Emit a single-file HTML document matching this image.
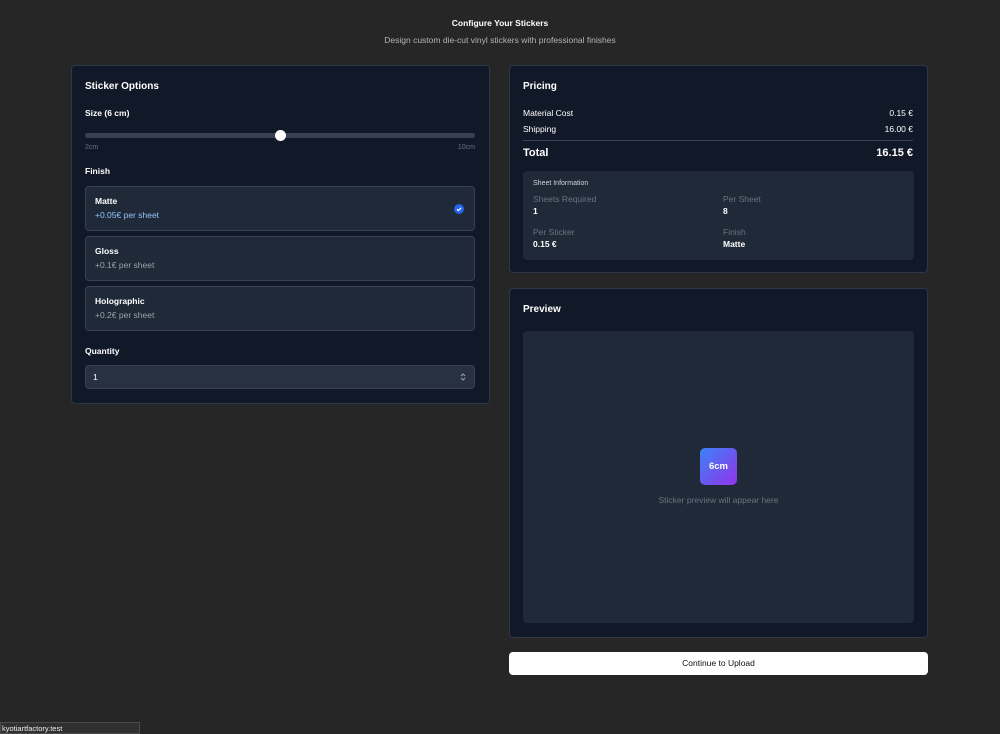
<!DOCTYPE html>
<html><head><meta charset="utf-8"><style>
*{box-sizing:border-box;margin:0;padding:0}
body{width:1000px;height:734px;background:#262626;font-family:"Liberation Sans",sans-serif;color:#fff;position:relative;overflow:hidden;font-size:9px}
.abs{position:absolute}
.card{position:absolute;background:#111827;border:1px solid #2d3748;border-radius:4px}
.h{font-size:10px;font-weight:bold}
.opt{position:absolute;left:13px;width:390px;height:45px;background:#1f2937;border:1px solid #374151;border-radius:4px}
.opt .t{position:absolute;left:9px;top:9px;font-weight:bold;font-size:8.5px}
.opt .s{position:absolute;left:9px;top:23px;font-size:8.5px;color:#9ca3af}
.row{position:absolute;left:13px;right:14px;font-size:8.5px}
.row span:last-child{float:right}
.lbl{position:absolute;color:#6b7280;font-size:8.5px}
.val{position:absolute;font-weight:bold;font-size:8.5px}
</style></head><body>
<div class="abs h" style="left:0;width:1000px;top:18px;text-align:center;font-size:8.5px">Configure Your Stickers</div>
<div class="abs" style="left:0;width:1000px;top:35px;text-align:center;font-size:8.5px;color:#b0b4bb">Design custom die-cut vinyl stickers with professional finishes</div>

<div class="card" style="left:71px;top:65px;width:419px;height:339px">
 <div class="abs h" style="left:13px;top:15px">Sticker Options</div>
 <div class="abs" style="left:13px;top:42px;font-weight:bold;font-size:8.5px">Size (6 cm)</div>
 <div class="abs" style="left:13px;top:67px;width:390px;height:5px;background:#374151;border-radius:3px"></div>
 <div class="abs" style="left:203px;top:64px;width:11px;height:11px;background:#fff;border-radius:50%"></div>
 <div class="abs" style="left:13px;top:78px;font-size:7px;color:#6b7280">2cm</div>
 <div class="abs" style="right:14px;top:78px;font-size:7px;color:#6b7280">10cm</div>
 <div class="abs" style="left:13px;top:100px;font-weight:bold;font-size:8.5px">Finish</div>
 <div class="opt" style="top:120px"><div class="t">Matte</div><div class="s" style="color:#93c5fd">+0.05€ per sheet</div>
  <div class="abs" style="right:10px;top:17px;width:10px;height:10px;border-radius:50%;background:#2563eb"><svg width="10" height="10" viewBox="0 0 10 10"><path d="M3 5.2l1.4 1.4L7.2 3.8" stroke="#fff" stroke-width="1.2" fill="none"/></svg></div></div>
 <div class="opt" style="top:170px"><div class="t">Gloss</div><div class="s">+0.1€ per sheet</div></div>
 <div class="opt" style="top:220px"><div class="t">Holographic</div><div class="s">+0.2€ per sheet</div></div>
 <div class="abs" style="left:13px;top:280px;font-weight:bold;font-size:8.5px">Quantity</div>
 <div class="abs" style="left:13px;top:299px;width:390px;height:24px;background:#283141;border:1px solid #374151;border-radius:4px">
  <div class="abs" style="left:7px;top:6px;font-size:8.5px">1</div>
  <svg class="abs" style="right:8px;top:6px" width="6" height="10" viewBox="0 0 6 10"><path d="M1 4l2-2 2 2M1 6l2 2 2-2" stroke="#9ca3af" fill="none"/></svg>
 </div>
</div>

<div class="card" style="left:509px;top:65px;width:419px;height:208px">
 <div class="abs h" style="left:13px;top:15px">Pricing</div>
 <div class="row" style="top:42px"><span>Material Cost</span><span>0.15 €</span></div>
 <div class="row" style="top:58px"><span>Shipping</span><span>16.00 €</span></div>
 <div class="abs" style="left:13px;right:14px;top:74px;height:1px;background:#374151"></div>
 <div class="row" style="top:81px;font-size:11px;font-weight:bold"><span>Total</span><span>16.15 €</span></div>
 <div class="abs" style="left:13px;top:105px;width:391px;height:89px;background:#1f2937;border-radius:4px">
  <div class="abs" style="left:10px;top:9px;font-size:7px;color:#d1d5db">Sheet Information</div>
  <div class="lbl" style="left:10px;top:23px">Sheets Required</div><div class="val" style="left:10px;top:35px">1</div>
  <div class="lbl" style="left:200px;top:23px">Per Sheet</div><div class="val" style="left:200px;top:35px">8</div>
  <div class="lbl" style="left:10px;top:56px">Per Sticker</div><div class="val" style="left:10px;top:68px">0.15 €</div>
  <div class="lbl" style="left:200px;top:56px">Finish</div><div class="val" style="left:200px;top:68px">Matte</div>
 </div>
</div>

<div class="card" style="left:509px;top:288px;width:419px;height:350px">
 <div class="abs h" style="left:13px;top:15px">Preview</div>
 <div class="abs" style="left:13px;top:42px;width:391px;height:292px;background:#1f2937;border-radius:4px">
  <div class="abs" style="left:177px;top:117px;width:37px;height:37px;border-radius:5px;background:linear-gradient(135deg,#3b82f6,#9333ea);text-align:center;line-height:37px;font-weight:bold;font-size:9.5px">6cm</div>
  <div class="abs" style="left:0;width:391px;top:164px;text-align:center;color:#6b7280;font-size:8.5px">Sticker preview will appear here</div>
 </div>
</div>

<div class="abs" style="left:509px;top:652px;width:419px;height:23px;background:#fff;border-radius:4px;color:#111;text-align:center;line-height:23px;font-size:8.5px">Continue to Upload</div>

<div class="abs" style="left:0;top:722px;width:140px;height:12px;background:#303030;border:1px solid #4a4a4a;font-size:7.5px;line-height:11px;padding-left:1px;color:#eee">kyotiartfactory.test</div>
</body></html>
